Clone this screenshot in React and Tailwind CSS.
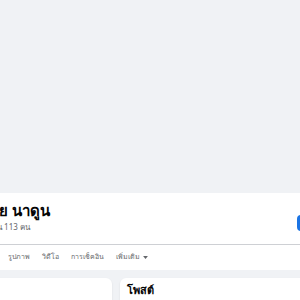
import React from "react";

const TABS = ["โพสต์", "เกี่ยวกับ", "เพื่อน", "รูปภาพ", "วิดีโอ", "การเช็คอิน"];

const App = () => {
    return (
        <div
            className="w-[300px] h-[300px] overflow-hidden bg-[#f0f2f5] relative"
            style={{ fontFamily: '"Noto Sans", "Liberation Sans", sans-serif' }}
        >
            {/* Cover area */}
            <div className="h-[193px]" />

            {/* Profile header */}
            <div className="bg-white">
                <div className="flex items-start justify-between h-[51px]">
                    <div className="pt-[6px]">
                        <div className="ml-[-38px] text-[15px] font-bold text-[#050505] leading-[22px] whitespace-nowrap">สมชาย นาดูน</div>
                        <div className="ml-[-16px] text-[8px] text-[#65676b] leading-[12px] whitespace-nowrap">เพื่อน 113 คน</div>
                    </div>
                    <div className="mt-[22px] w-[60px] h-[16px] mr-[-57px] rounded-[4px] bg-[#1b74e4]" />
                </div>
                <div className="border-t border-[#ced0d4]" />
                <div className="flex items-center h-[25px] gap-[12px] ml-[-84px] text-[7px] text-[#65676b] whitespace-nowrap">
                    {TABS.map((t) => (
                        <span key={t}>{t}</span>
                    ))}
                    <span className="flex items-center gap-[3px]">
                        เพิ่มเติม
                        <svg width="5" height="3" viewBox="0 0 8 5">
                            <path d="M0 0h8L4 5z" fill="#65676b" />
                        </svg>
                    </span>
                </div>
            </div>

            {/* Content */}
            <div className="flex gap-[8px] pt-[8px]">
                <div className="w-[112px] h-[40px] bg-white rounded-r-[6px] shadow-[0_1px_2px_rgba(0,0,0,0.1)]" />
                <div className="flex-1 h-[40px] bg-white rounded-l-[6px] shadow-[0_1px_2px_rgba(0,0,0,0.1)] px-[7px] pt-[5px]">
                    <div className="text-[11px] font-bold text-[#050505] leading-[14px]">โพสต์</div>
                </div>
            </div>
        </div>
    );
};

export default App;
